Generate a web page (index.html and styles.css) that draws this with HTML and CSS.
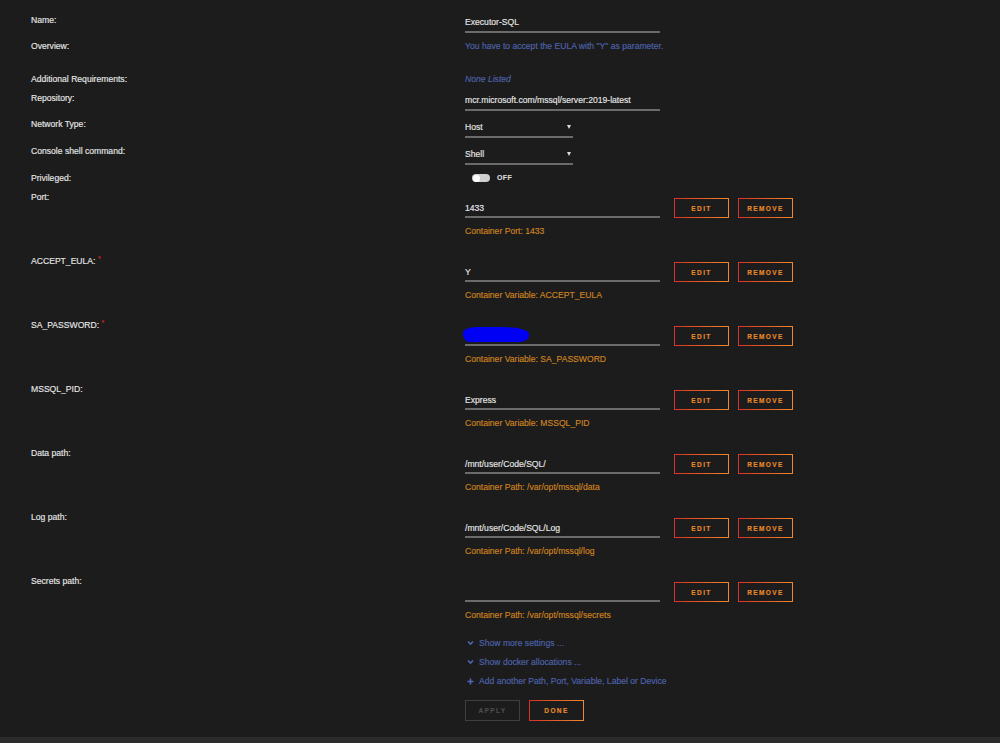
FILE: index.html
```html
<!DOCTYPE html>
<html lang="en">
<head>
  <meta charset="UTF-8" />
  <meta name="viewport" content="width=device-width, initial-scale=1" />
  <title>Update Container - Executor-SQL</title>
  <link rel="stylesheet" href="styles.css">
</head>
<body>
  <div class="form">
    <div class="row">
      <div class="label">Name:</div>
      <div class="value"><div class="field">Executor-SQL</div></div>
    </div>
    <div class="row overview">
      <div class="label">Overview:</div>
      <div class="value blue">You have to accept the EULA with "Y" as parameter.</div>
    </div>
    <div class="row">
      <div class="label">Additional Requirements:</div>
      <div class="value blue"><em>None Listed</em></div>
    </div>
    <div class="row">
      <div class="label">Repository:</div>
      <div class="value"><div class="field">mcr.microsoft.com/mssql/server:2019-latest</div></div>
    </div>
    <div class="row">
      <div class="label">Network Type:</div>
      <div class="value"><div class="field select">Host <span class="arrow"></span></div></div>
    </div>
    <div class="row">
      <div class="label">Console shell command:</div>
      <div class="value"><div class="field select">Shell <span class="arrow"></span></div></div>
    </div>
    <div class="row">
      <div class="label">Privileged:</div>
      <div class="value">
        <div class="switch"><span class="track"><span class="knob"></span></span> OFF</div>
      </div>
    </div>

    <div class="row config">
      <div class="label">Port:</div>
      <div class="value">
        <div class="entry">
          <div class="field">1433</div>
          <div class="buttons"><button class="btn">Edit</button><button class="btn">Remove</button></div>
        </div>
        <div class="desc">Container Port: 1433</div>
      </div>
    </div>
    <div class="row config">
      <div class="label">ACCEPT_EULA: <span class="req">*</span></div>
      <div class="value">
        <div class="entry">
          <div class="field">Y</div>
          <div class="buttons"><button class="btn">Edit</button><button class="btn">Remove</button></div>
        </div>
        <div class="desc">Container Variable: ACCEPT_EULA</div>
      </div>
    </div>
    <div class="row config">
      <div class="label">SA_PASSWORD: <span class="req">*</span></div>
      <div class="value">
        <div class="entry">
          <div class="field"><span class="redact"></span></div>
          <div class="buttons"><button class="btn">Edit</button><button class="btn">Remove</button></div>
        </div>
        <div class="desc">Container Variable: SA_PASSWORD</div>
      </div>
    </div>
    <div class="row config">
      <div class="label">MSSQL_PID:</div>
      <div class="value">
        <div class="entry">
          <div class="field">Express</div>
          <div class="buttons"><button class="btn">Edit</button><button class="btn">Remove</button></div>
        </div>
        <div class="desc">Container Variable: MSSQL_PID</div>
      </div>
    </div>
    <div class="row config">
      <div class="label">Data path:</div>
      <div class="value">
        <div class="entry">
          <div class="field">/mnt/user/Code/SQL/</div>
          <div class="buttons"><button class="btn">Edit</button><button class="btn">Remove</button></div>
        </div>
        <div class="desc">Container Path: /var/opt/mssql/data</div>
      </div>
    </div>
    <div class="row config">
      <div class="label">Log path:</div>
      <div class="value">
        <div class="entry">
          <div class="field">/mnt/user/Code/SQL/Log</div>
          <div class="buttons"><button class="btn">Edit</button><button class="btn">Remove</button></div>
        </div>
        <div class="desc">Container Path: /var/opt/mssql/log</div>
      </div>
    </div>
    <div class="row config last">
      <div class="label">Secrets path:</div>
      <div class="value">
        <div class="entry">
          <div class="field">&nbsp;</div>
          <div class="buttons"><button class="btn">Edit</button><button class="btn">Remove</button></div>
        </div>
        <div class="desc">Container Path: /var/opt/mssql/secrets</div>
      </div>
    </div>

    <div class="actions">
      <div class="links">
        <a class="link"><svg width="7" height="6" viewBox="0 0 7 6"><path d="M1 1.5 L3.5 4 L6 1.5" fill="none" stroke="#4e66b4" stroke-width="1.6"/></svg>Show more settings ...</a>
        <a class="link"><svg width="7" height="6" viewBox="0 0 7 6"><path d="M1 1.5 L3.5 4 L6 1.5" fill="none" stroke="#4e66b4" stroke-width="1.6"/></svg>Show docker allocations ...</a>
        <a class="link"><svg width="7" height="7" viewBox="0 0 7 7"><path d="M3.5 0.5 V6.5 M0.5 3.5 H6.5" fill="none" stroke="#4e66b4" stroke-width="1.6"/></svg>Add another Path, Port, Variable, Label or Device</a>
      </div>
      <div class="submit">
        <button class="btn disabled">Apply</button>
        <button class="btn">Done</button>
      </div>
    </div>
  </div>
  <div class="footer"></div>
</body>
</html>
```

FILE: styles.css
```css
body {
  margin: 0;
  min-height: 100vh;
  display: flex;
  flex-direction: column;
  background-color: #1c1c1c;
  color: #e6e6e6;
  font-family: "Liberation Sans", Arial, sans-serif;
  font-size: 8.6px;
  -webkit-text-stroke: 0.15px currentColor;
}
.form {
  flex: 1;
  padding: 14px 0 0 31px;
}
.row {
  display: grid;
  grid-template-columns: 434px 1fr;
  align-items: start;
  line-height: 12px;
  margin-bottom: 7px;
}
.row.overview {
  margin-bottom: 21px;
}
.blue {
  color: #4e63ad;
}
.req {
  color: #c62a2a;
  font-size: 7px;
  vertical-align: top;
  position: relative;
  top: -2px;
}
.field {
  width: 195px;
  padding: 2px 0 3px;
  border-bottom: 2px solid #6b6b6b;
  white-space: nowrap;
}
.field.select {
  width: 108px;
  padding: 3px 0;
  display: flex;
  justify-content: space-between;
  align-items: center;
}
.arrow {
  width: 0;
  height: 0;
  margin-right: 2px;
  border-left: 2.5px solid transparent;
  border-right: 2.5px solid transparent;
  border-top: 4px solid #dcdcdc;
}
.switch {
  display: flex;
  align-items: center;
  gap: 7px;
  padding-left: 7px;
  font-size: 7px;
  font-weight: bold;
  letter-spacing: 0.4px;
  color: #d8d8d8;
}
.track {
  display: flex;
  align-items: center;
  width: 18px;
  height: 8px;
  padding: 0 1px;
  box-sizing: border-box;
  border-radius: 4px;
  background-color: #cfcfcf;
}
.knob {
  width: 7px;
  height: 7px;
  border-radius: 50%;
  background-color: #fff;
}
.row.config {
  margin-bottom: 18px;
}
.row.config.last {
  margin-bottom: 16px;
}
.config .field {
  padding: 11px 0 2px;
}
.entry {
  display: flex;
  align-items: flex-end;
  gap: 14px;
}
.buttons {
  display: flex;
  gap: 9px;
}
.desc {
  margin-top: 7px;
  color: #cf8420;
}
.redact {
  display: inline-block;
  width: 66px;
  height: 15px;
  margin: -3px 0 -3px -2px;
  vertical-align: top;
  background-color: #0000f5;
  border-radius: 20% 40% 15% 10% / 40% 45% 40% 50%;
}
.btn {
  width: 55px;
  height: 20px;
  padding: 0;
  box-sizing: border-box;
  background: transparent;
  border: 1.5px solid;
  border-image: linear-gradient(90deg, #d93228, #ec8a2c) 1;
  color: #e58a2b;
  font-family: "Liberation Sans", Arial, sans-serif;
  font-size: 6.5px;
  font-weight: bold;
  letter-spacing: 1.4px;
  text-transform: uppercase;
  cursor: pointer;
}
.btn.disabled {
  border-image: none;
  border-color: #3f3f3f;
  color: #4d4d4d;
  cursor: default;
}
.actions {
  margin-left: 434px;
}
.links {
  display: flex;
  flex-direction: column;
  gap: 7px;
  line-height: 12px;
}
.link {
  display: flex;
  align-items: center;
  gap: 5px;
  padding-left: 2px;
  color: #4e63ad;
  cursor: pointer;
}
.submit {
  display: flex;
  gap: 9px;
  margin-top: 13px;
}
.submit .btn {
  height: 21px;
}
.footer {
  height: 6px;
  background-color: #2b2b2b;
}
```
